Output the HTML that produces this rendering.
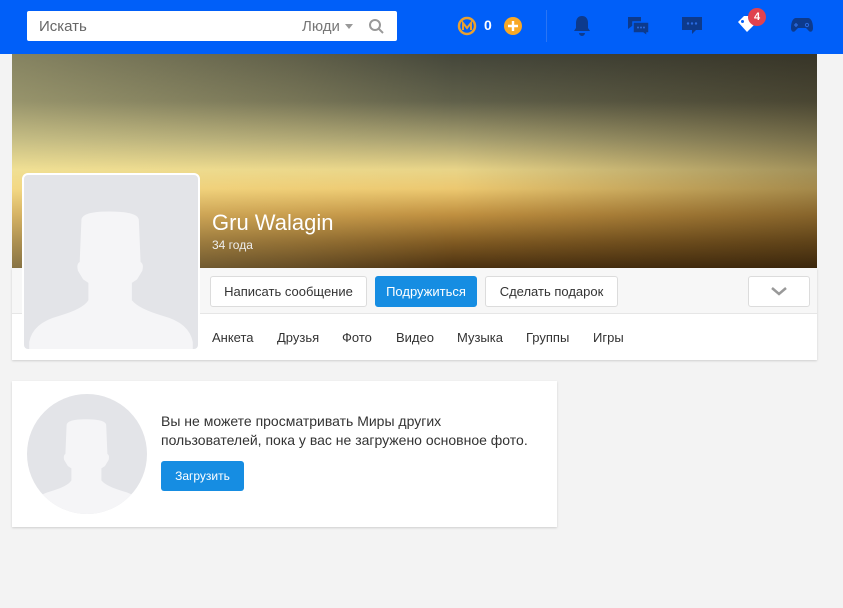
<!DOCTYPE html>
<html><head><meta charset="utf-8"><style>
*{box-sizing:border-box;margin:0;padding:0}
body{width:843px;height:608px;background:#f3f3f3;font-family:"Liberation Sans",sans-serif;position:relative;overflow:hidden;color:#333}
.top{position:absolute;left:0;top:0;width:843px;height:54px;background:#005ff9}
.search{position:absolute;left:27px;top:11px;width:370px;height:30px;background:#fff;border-radius:2px}
.search .ph{position:absolute;left:12px;top:7px;font-size:15px;color:#666}
.search .ppl{position:absolute;left:275px;top:7px;font-size:15px;color:#777}
.abs{position:absolute}
.banner{position:absolute;left:12px;top:54px;width:805px;height:214px;
background:
linear-gradient(90deg,rgba(255,245,170,.35) 0%,rgba(255,240,160,.15) 35%,rgba(0,0,0,0) 55%,rgba(30,20,5,.35) 100%),
linear-gradient(180deg,#44463a 0%,#60604a 22%,#a8a070 40%,#e8d488 54%,#ecc870 63%,#c09040 75%,#805a22 88%,#4a3010 100%);}
.card{position:absolute;left:12px;top:268px;width:805px;height:92px;background:#fff;box-shadow:0 1px 2px rgba(0,0,0,.15)}
.btnrow{position:absolute;left:0;top:0;width:805px;height:46px;background:#f7f7f7;border-bottom:1px solid #e6e6e6}
.btn{position:absolute;top:8px;height:31px;border:1px solid #dcdcdc;background:#fff;border-radius:3px;font-size:13px;color:#333;text-align:center;line-height:29px}
.tabs{position:absolute;font-size:13px;color:#333}
.tabs span{position:absolute;white-space:nowrap}
.av{position:absolute;left:22px;top:173px;width:178px;height:178px;background:#e3e4e8;border:2px solid #fff;border-radius:6px;overflow:hidden}
.box{position:absolute;left:12px;top:381px;width:545px;height:146px;background:#fff;box-shadow:0 1px 2px rgba(0,0,0,.15)}
</style></head><body>
<div class="top">
 <div class="search"><span class="ph">Искать</span><span class="ppl">Люди</span>
  <svg class="abs" style="left:318px;top:13px" width="8" height="5"><path d="M0 0h8L4 5z" fill="#999"/></svg>
  <svg class="abs" style="left:342px;top:8px" width="15" height="15" fill="none" stroke="#999" stroke-width="2"><circle cx="6" cy="6" r="5"/><path d="M10 10l4 4"/></svg>
 </div>
 <svg class="abs" style="left:457px;top:16px" width="20" height="20"><circle cx="10" cy="10" r="8" fill="none" stroke="#e8a030" stroke-width="2.5"/><path d="M6 14V7l4 5 4-5v7" fill="none" stroke="#e8a030" stroke-width="2"/></svg>
 <span class="abs" style="left:484px;top:17px;color:#fff;font-weight:bold;font-size:14px">0</span>
 <svg class="abs" style="left:503px;top:16px" width="20" height="20"><circle cx="10" cy="10" r="9" fill="#f9a825"/><path d="M10 5v10M5 10h10" stroke="#fff" stroke-width="2.4"/></svg>
 <div class="abs" style="left:546px;top:10px;width:1px;height:32px;background:#2a75f5"></div>
 <svg class="abs" style="left:573px;top:15px" width="18" height="22"><path d="M9 1c-4 0-6 3-6 7v5l-2 3h16l-2-3V8c0-4-2-7-6-7z M6 18a3 3 0 0 0 6 0z" fill="#0d3a8c"/></svg>
 <svg class="abs" style="left:626px;top:15px" width="24" height="22"><path d="M1 2h14v9H6l-4 3V2z" fill="#0d3a8c"/><path d="M7 7h16v11h-2v3l-4-3H7z" fill="#0d3a8c" stroke="#005ff9" stroke-width="1.5"/><circle cx="12" cy="12.5" r="1" fill="#2a6ae0"/><circle cx="15" cy="12.5" r="1" fill="#2a6ae0"/><circle cx="18" cy="12.5" r="1" fill="#2a6ae0"/></svg>
 <svg class="abs" style="left:681px;top:16px" width="22" height="20"><path d="M1 1h20v13h-6l-4 4v-4H1z" fill="#0d3a8c"/><circle cx="7" cy="7.5" r="1.2" fill="#2a6ae0"/><circle cx="11" cy="7.5" r="1.2" fill="#2a6ae0"/><circle cx="15" cy="7.5" r="1.2" fill="#2a6ae0"/></svg>
 <svg class="abs" style="left:736px;top:14px" width="22" height="22"><path d="M2 8l6-6h5l7 7-9 9z" fill="#fff"/><circle cx="6.5" cy="7.5" r="1.5" fill="#005ff9"/></svg>
 <div class="abs" style="left:748px;top:8px;width:18px;height:18px;border-radius:9px;background:#e0424f;color:#fff;font-size:11px;font-weight:bold;text-align:center;line-height:18px">4</div>
 <svg class="abs" style="left:791px;top:17px" width="22" height="16"><path d="M5 1h12c3 0 5 4 5 10 0 4-3 5-5 2l-2-2H7l-2 2c-2 3-5 2-5-2C0 5 2 1 5 1z" fill="#0d3a8c"/><path d="M5 6v4M3 8h4" stroke="#2a6ae0" stroke-width="1.3"/><circle cx="16" cy="8" r="1.6" fill="none" stroke="#2a6ae0"/></svg>
</div>
<div class="banner"></div>
<div class="abs" style="left:212px;top:210px;color:#fff;font-size:22px">Gru Walagin</div>
<div class="abs" style="left:212px;top:238px;color:#eee;font-size:12px">34 года</div>
<div class="card">
 <div class="btnrow">
  <div class="btn" style="left:198px;width:157px">Написать сообщение</div>
  <div class="btn" style="left:363px;width:102px;background:#168de2;border-color:#168de2;color:#fff">Подружиться</div>
  <div class="btn" style="left:473px;width:133px">Сделать подарок</div>
  <div class="btn" style="left:736px;width:62px"><svg width="16" height="10" style="margin-top:10px"><path d="M1 1l7 6 7-6" fill="none" stroke="#999" stroke-width="2.5"/></svg></div>
 </div>
</div>
<div class="tabs" style="top:330px;left:0">
 <span style="left:212px">Анкета</span><span style="left:277px">Друзья</span><span style="left:342px">Фото</span><span style="left:396px">Видео</span><span style="left:457px">Музыка</span><span style="left:526px">Группы</span><span style="left:593px">Игры</span>
</div>
<div class="av"><svg width="174" height="174" viewBox="0 0 100 100"><path d="M33 26Q33 21 49 21Q66 21 66 26L67 50Q69 51 68 55L65 60L62 62L62 72Q66 77 80 81Q95 85 97 96L97 100L3 100L3 96Q5 85 20 81Q34 77 37 72L37 62L34 60L31 55Q30 51 32 50Z" fill="#f5f5f7"/></svg></div>
<div class="box">
 <div class="abs" style="left:15px;top:13px;width:120px;height:120px;border-radius:60px;background:#e3e4e8;overflow:hidden"><svg width="120" height="120" viewBox="0 0 100 100"><path d="M33 26Q33 21 49 21Q66 21 66 26L67 50Q69 51 68 55L65 60L62 62L62 72Q66 77 80 81Q95 85 97 96L97 100L3 100L3 96Q5 85 20 81Q34 77 37 72L37 62L34 60L31 55Q30 51 32 50Z" fill="#f5f5f7"/></svg></div>
 <div class="abs" style="left:149px;top:31px;font-size:14px;line-height:19px;color:#333">Вы не можете просматривать Миры других<br>пользователей, пока у вас не загружено основное фото.</div>
 <div class="abs" style="left:149px;top:80px;width:83px;height:30px;background:#168de2;border-radius:3px;color:#fff;font-size:12px;text-align:center;line-height:30px">Загрузить</div>
</div>
</body></html>
